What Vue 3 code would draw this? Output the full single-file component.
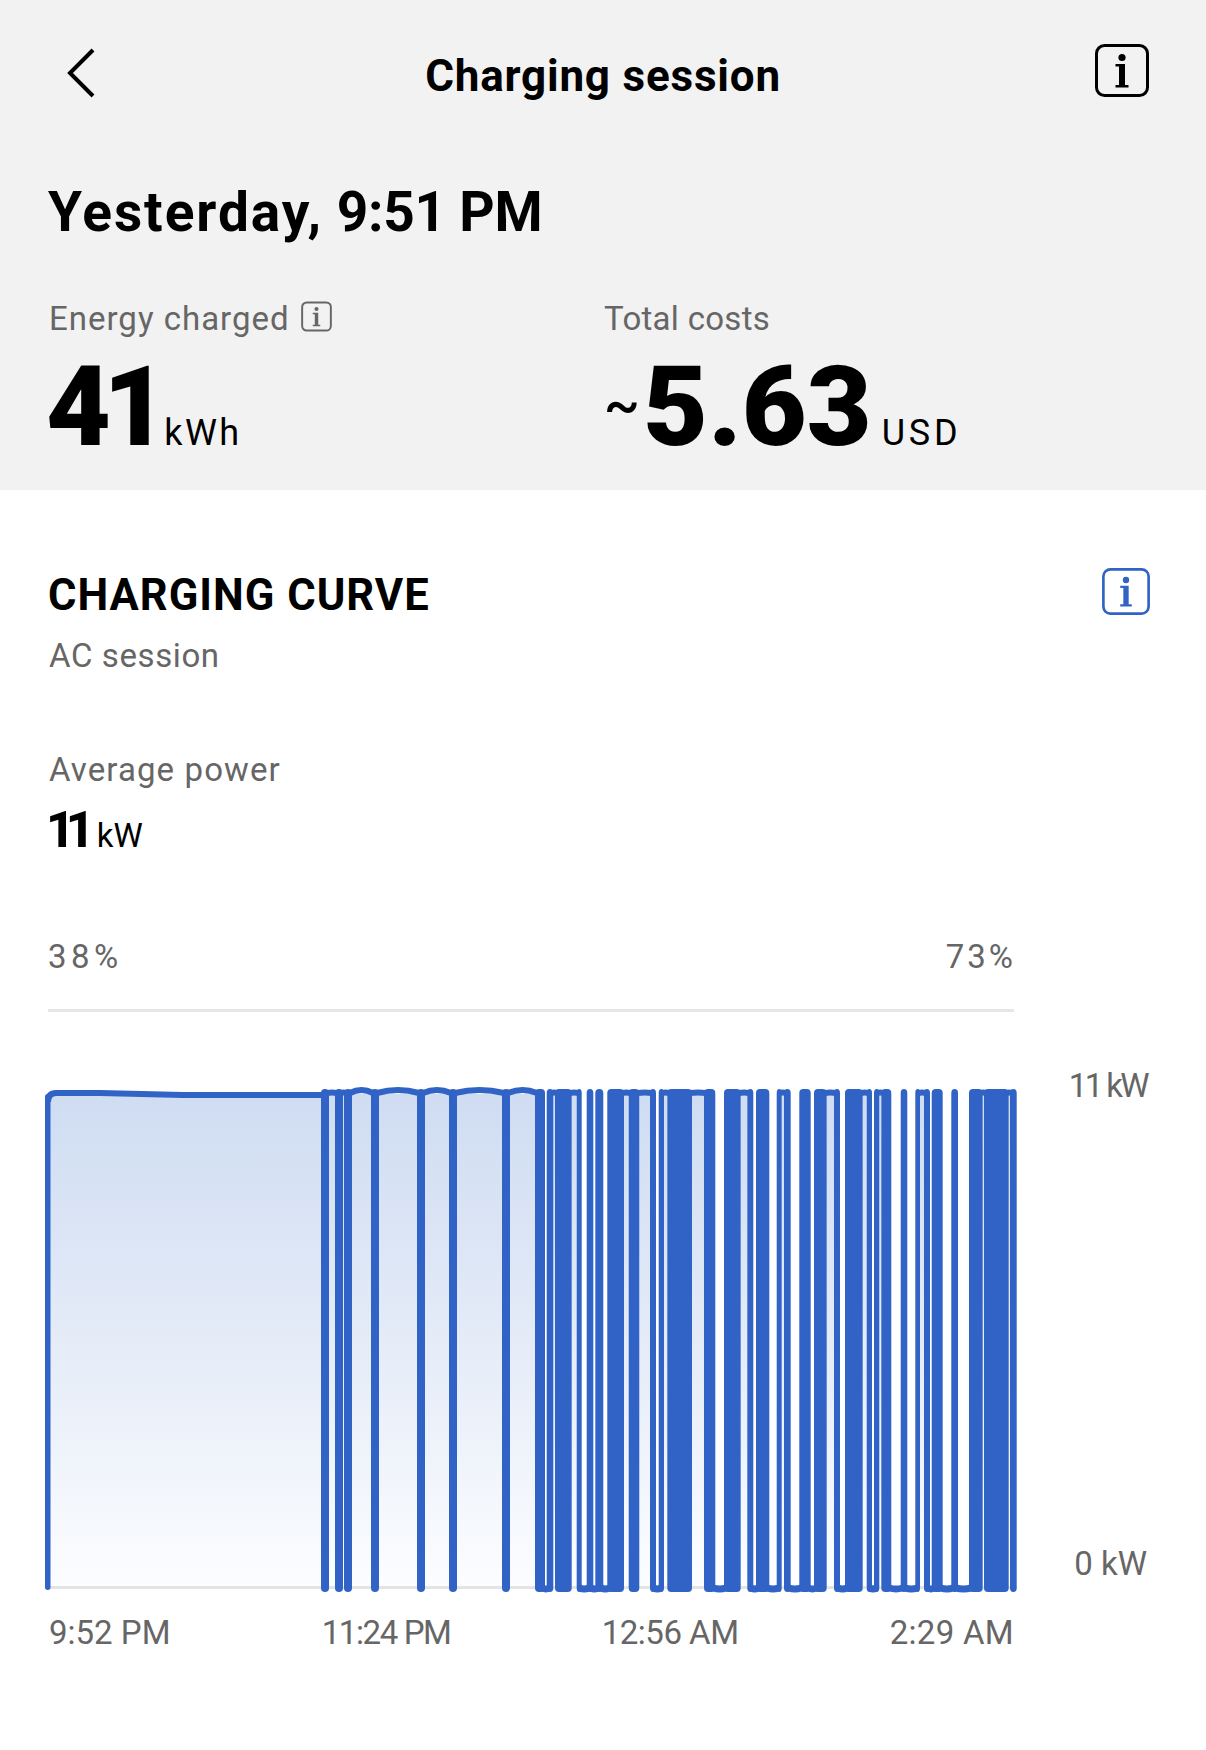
<script setup>
import { computed } from 'vue'

const TOP = 1089
const BOTTOM = 1592

// vertical runs of the curve, [from, to, gap after: t = stays at 11 kW, b = drops to 0 kW]
const runs = [
  [321, 329, 't'], [335, 343, 't'], [344, 352, 't'], [371, 379, 't'], [417, 425, 't'], [449, 457, 't'],
  [502, 510, 't'], [535, 545, 'b'], [546.7, 553.3, 't'], [555, 571.7, 't'], [576.7, 581.7, 'b'],
  [586.7, 593.3, 'b'], [595.3, 603.3, 'b'], [607.3, 624, 't'], [628.7, 639.3, 't'], [650, 656, 'b'],
  [658.7, 664, 't'], [667.3, 692, 't'], [704, 715.3, 'b'], [724, 740.7, 't'], [747.3, 753.3, 'b'],
  [756, 769.3, 'b'], [776.7, 781.7, 't'], [784, 790.7, 'b'], [799.3, 810.7, 'b'], [814, 826.7, 't'],
  [834, 840, 'b'], [845, 862.7, 't'], [866.7, 872, 'b'], [874, 879.3, 't'], [881.3, 891.3, 'b'],
  [900.7, 907.3, 'b'], [915.3, 920, 't'], [924, 930, 'b'], [931.7, 942.7, 'b'], [951.3, 958, 'b'],
  [969, 982.7, 't'], [984, 1008.7, 't'], [1010, 1016.7, 'x']
]

const bars = computed(() => runs.map(([a, b]) => ({ x: a, width: b - a })))

const gaps = computed(() => runs.slice(0, -1).map(([, a, type], i) => ({ a, b: runs[i + 1][0], type })))

const topLine = computed(() => {
  let d = 'M48 1102 Q48 1093 56 1093 L100 1093 L183 1095 L324 1095 '
  gaps.value.filter(g => g.type === 't').forEach(g => {
    const hump = g.b - g.a > 12 ? 1087 : 1092
    d += `M${g.a - 2} 1093 Q${(g.a + g.b) / 2} ${hump} ${g.b + 2} 1093 `
  })
  return d
})

const bottomLine = computed(() => {
  let d = ''
  gaps.value.filter(g => g.type === 'b').forEach(g => {
    d += `M${g.a - 2} 1588 Q${(g.a + g.b) / 2} 1590 ${g.b + 2} 1588 `
  })
  return d
})

const area = computed(() => {
  let d = `M48 1094 H322 V1587 H48 Z `
  gaps.value.filter(g => g.type === 't').forEach(g => {
    d += `M${g.a} 1094 H${g.b} V1587 H${g.a} Z `
  })
  return d
})
</script>

<template>
  <div class="page">
    <header class="top">
      <nav class="nav">
        <svg class="back" viewBox="0 0 28 50" fill="none">
          <path d="M26 2 L3 25 L26 48" stroke="#000" stroke-width="4" />
        </svg>
        <div class="title">Charging session</div>
        <svg class="info info-lg" viewBox="0 0 54 53">
          <rect x="1.5" y="1.5" width="51" height="50" rx="8" fill="none" stroke="currentColor" stroke-width="3" />
          <circle cx="27" cy="13.5" r="3.6" fill="currentColor" />
          <path d="M20.5 20 H30 V41 H33.5 V43.5 H20.5 V41 H24 V22.5 H20.5 Z" fill="currentColor" />
        </svg>
      </nav>

      <h1 class="date"><span class="day">Yesterday,</span> <span class="time">9:51 PM</span></h1>

      <div class="stats">
        <div>
          <div class="label label-icon">
            Energy charged
            <svg class="info info-sm" viewBox="0 0 54 53">
              <rect x="2" y="2" width="50" height="49" rx="8" fill="none" stroke="currentColor" stroke-width="3.4" />
              <circle cx="27" cy="13.5" r="3.6" fill="currentColor" />
              <path d="M20.5 20 H30 V41 H33.5 V43.5 H20.5 V41 H24 V22.5 H20.5 Z" fill="currentColor" />
            </svg>
          </div>
          <div class="value">
            <span class="big big-kwh">41</span>
            <span class="unit kwh">kWh</span>
          </div>
        </div>
        <div>
          <div class="label costs">Total costs</div>
          <div class="value">
            <span class="tilde">~</span>
            <span class="big">5.63</span>
            <span class="unit usd">USD</span>
          </div>
        </div>
      </div>
    </header>

    <section class="curve">
      <div class="curve-head">
        <div>
          <h2 class="heading">CHARGING CURVE</h2>
          <div class="label session">AC session</div>
        </div>
        <svg class="info info-blue" viewBox="0 0 54 53">
          <rect x="1.5" y="1.5" width="51" height="50" rx="8" fill="none" stroke="currentColor" stroke-width="3" />
          <circle cx="27" cy="13.5" r="3.6" fill="currentColor" />
          <path d="M20.5 20 H30 V41 H33.5 V43.5 H20.5 V41 H24 V22.5 H20.5 Z" fill="currentColor" />
        </svg>
      </div>

      <div class="label average">Average power</div>
      <div class="power">
        <span class="power-num">11</span>
        <span class="power-unit">kW</span>
      </div>

      <div class="percent label">
        <span class="start">38%</span>
        <span>73%</span>
      </div>
      <div class="divider"></div>

      <div class="chart">
        <svg class="plot" viewBox="40 1060 985 540">
          <defs>
            <linearGradient id="fade" gradientUnits="userSpaceOnUse" x1="0" y1="1094" x2="0" y2="1587">
              <stop offset="0" stop-color="#cfdcf2" />
              <stop offset="0.6" stop-color="#e9eff9" />
              <stop offset="1" stop-color="#fcfdff" />
            </linearGradient>
          </defs>
          <path :d="area" fill="url(#fade)" />
          <rect x="48" y="1586" width="969" height="3" fill="#e4e4e4" />
          <rect x="45" y="1094" width="5.5" height="496" rx="2.7" fill="#3063c5" />
          <rect
            v-for="bar in bars"
            :key="bar.x"
            :x="bar.x"
            :y="TOP"
            :width="bar.width"
            :height="BOTTOM - TOP"
            rx="4"
            fill="#3063c5"
          />
          <path :d="topLine" fill="none" stroke="#3063c5" stroke-width="6" />
          <path :d="bottomLine" fill="none" stroke="#3063c5" stroke-width="7" />
        </svg>
        <div class="y-axis label">
          <span class="max-kw">11 kW</span>
          <span class="min-kw">0 kW</span>
        </div>
      </div>

      <div class="times label">
        <span>9:52 PM</span>
        <span class="tight">11:24 PM</span>
        <span class="tight-sm">12:56 AM</span>
        <span class="wide-sm">2:29 AM</span>
      </div>
    </section>
  </div>
</template>

<style scoped>
.page {
  width: 1206px;
  height: 1750px;
  overflow: hidden;
  background: #fff;
  color: #000;
  font-family: Roboto, "Noto Sans", sans-serif;
}

.top {
  height: 490px;
  box-sizing: border-box;
  padding: 42px 57px 0 48px;
  background: #f2f2f2;
}

.nav {
  display: grid;
  grid-template-columns: 1fr auto 1fr;
  align-items: center;
  height: 53px;
  margin-left: 9px;
}

.back {
  width: 28px;
  height: 50px;
  margin: 6px 0 0 10px;
}

.title {
  margin-top: 11px;
  font-size: 44px;
  line-height: 1;
  font-weight: 700;
  letter-spacing: 0.8px;
  white-space: nowrap;
}

.info {
  display: block;
  flex: none;
}

.info-lg {
  width: 54px;
  height: 53px;
  justify-self: end;
}

.info-sm {
  width: 31px;
  height: 31px;
  color: #666;
  margin-top: -4px;
}

.info-blue {
  width: 48px;
  height: 47px;
  color: #3063c5;
}

.date {
  margin: 90px 0 0;
  font-size: 55px;
  line-height: 1;
  font-weight: 700;
}

.day {
  letter-spacing: 1.95px;
}

.time {
  letter-spacing: -0.25px;
}

.stats {
  display: grid;
  grid-template-columns: 556px 1fr;
  margin-top: 62px;
}

.label {
  font-size: 33px;
  line-height: 1;
  color: #666;
}

.label-icon {
  display: flex;
  align-items: center;
  gap: 11px;
  margin-left: 1px;
  letter-spacing: 1px;
}

.costs {
  letter-spacing: 0.3px;
}

.value {
  display: flex;
  align-items: baseline;
  margin-top: 16px;
}

.big {
  font-size: 112px;
  line-height: 1;
  font-weight: 900;
}

.big-kwh {
  margin-left: -2px;
  letter-spacing: -8px;
}

.unit {
  margin-left: 10px;
  font-size: 36px;
}

.kwh {
  margin-left: 4.5px;
  letter-spacing: 2.4px;
}

.usd {
  letter-spacing: 3.8px;
}

.tilde {
  width: 39px;
  font-size: 54px;
  font-weight: 500;
  transform: translateY(-22px);
}

.curve {
  padding: 78px 56px 0 48px;
}

.curve-head {
  display: flex;
  justify-content: space-between;
  align-items: flex-start;
}

.heading {
  margin: 6px 0 0;
  font-size: 43.5px;
  line-height: 1;
  font-weight: 700;
  letter-spacing: 1px;
}

.session {
  margin: 21px 0 0 1px;
  letter-spacing: 0.6px;
}

.average {
  margin: 81px 0 0 1px;
  letter-spacing: 1.1px;
}

.power {
  display: flex;
  align-items: baseline;
  margin-top: 19px;
}

.power-num {
  margin-left: -2px;
  font-size: 50px;
  line-height: 1;
  font-weight: 800;
  letter-spacing: -9px;
}

.power-unit {
  margin-left: 11px;
  font-size: 33px;
}

.percent {
  display: flex;
  justify-content: space-between;
  width: 968px;
  margin-top: 85px;
  letter-spacing: 3px;
}

.start {
  letter-spacing: 4.5px;
}

.divider {
  width: 966px;
  height: 3px;
  margin-top: 36px;
  background: #e6e6e6;
}

.chart {
  display: flex;
  margin: 48px 0 0 -8px;
}

.plot {
  display: block;
  flex: none;
  width: 985px;
  height: 540px;
}

.y-axis {
  display: flex;
  flex: 1;
  flex-direction: column;
  align-items: flex-end;
  justify-content: space-between;
  height: 511px;
  padding-top: 9px;
}

.max-kw {
  margin-right: 3px;
  letter-spacing: -2.6px;
}

.min-kw {
  margin-right: 3px;
}

.times {
  display: flex;
  justify-content: space-between;
  width: 965px;
  margin-top: 16px;
  padding-left: 1px;
}

.tight {
  letter-spacing: -1.4px;
}

.tight-sm {
  letter-spacing: -0.5px;
}

.wide-sm {
  letter-spacing: 0.3px;
}
</style>

<style>
html,
body {
  background: #fff;
}
</style>
